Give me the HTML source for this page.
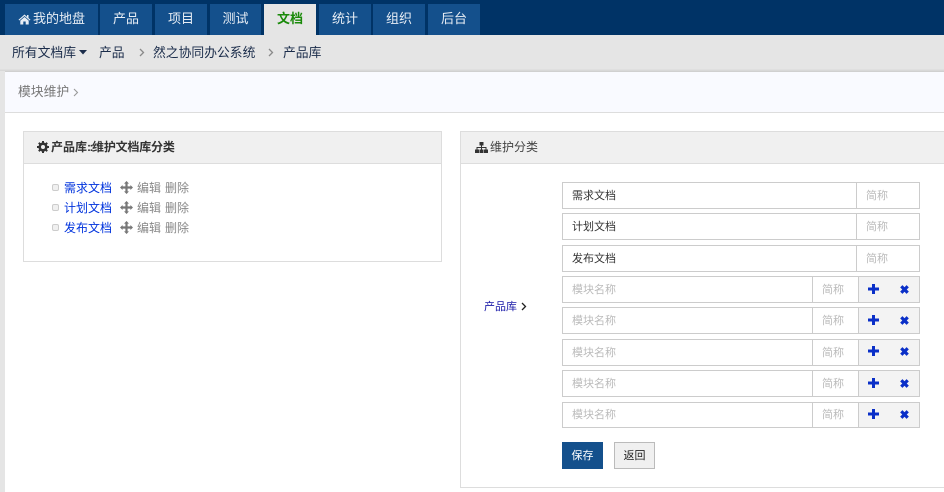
<!DOCTYPE html>
<html lang="zh">
<head>
<meta charset="utf-8">
<title>模块维护</title>
<style>
html,body{margin:0;padding:0}
body{width:944px;height:492px;overflow:hidden;position:relative;background:#e5e5e5;font-family:"Liberation Sans","Noto Sans CJK SC",sans-serif;font-size:12px;color:#333}
.a{position:absolute;box-sizing:border-box;white-space:nowrap}
.tab{position:absolute;top:4px;height:31px;background:#14508c;color:#e8eef5;font-size:13px;line-height:30px;text-align:center}
.crumb{position:absolute;top:35px;height:36px;line-height:35px;font-size:12.8px;color:#1a2c4a;white-space:nowrap}
.li{position:absolute;left:64px;height:20px;line-height:20px;color:#0033dd;white-space:nowrap}
.li i{position:absolute;left:-12px;top:6px;width:7px;height:7px;background:#f0f0f0;border:1px solid #ccc;border-radius:2px;box-sizing:border-box}
.g{color:#888}
.row{position:absolute;left:562px;width:358px;border:1px solid #ccc;box-sizing:border-box;background:#fff;line-height:27px;white-space:nowrap;font-size:11px}
.row span{position:absolute;top:0}
.row .v{left:9px;color:#333}
.row .p{left:9px;color:#bbb}
.row .s1{left:293px;top:0;bottom:0;width:1px;background:#ccc;height:100%}
.row .t1{left:303px;color:#bbb}
.row .s2{left:249px;width:1px;height:100%;background:#ccc}
.row .t2{left:259px;color:#bbb}
.row .add{left:295px;width:61px;height:100%;background:#f3f3f3;border-left:1px solid #ccc;box-sizing:border-box}
svg{display:block;position:absolute}
</style>
</head>
<body>
<div class="a" style="left:0;top:0;width:944px;height:35px;background:#003366"></div>
<div class="tab" style="left:5px;width:93px;padding-left:15px;box-sizing:border-box">我的地盘</div>
<svg style="left:18px;top:14px" width="13" height="11" viewBox="0 0 13 11"><path d="M6.5 0.5 L0.5 5.7 L1.3 6.5 L6.5 2 L11.7 6.5 L12.5 5.7 L10.5 4 V1 H9 V2.7Z M2.3 6.6 V10.5 H5.3 V7.5 H7.7 V10.5 H10.7 V6.6 L6.5 3Z" fill="#e8eef5"/></svg>
<div class="tab" style="left:100px;width:52px">产品</div>
<div class="tab" style="left:155px;width:52px">项目</div>
<div class="tab" style="left:210px;width:51px">测试</div>
<div class="tab" style="left:264px;width:52px;background:#e5e5e5;color:#1a8a0a;font-weight:bold">文档</div>
<div class="tab" style="left:319px;width:52px">统计</div>
<div class="tab" style="left:373px;width:52px">组织</div>
<div class="tab" style="left:428px;width:52px">后台</div>

<div class="crumb" style="left:12px">所有文档库</div>
<svg style="left:79px;top:50px" width="8" height="5" viewBox="0 0 8 5"><path d="M0 0H8L4 4.5Z" fill="#1a2c4a"/></svg>
<div class="crumb" style="left:99px">产品</div>
<svg style="left:139px;top:48px" width="6" height="9" viewBox="0 0 6 9"><path d="M1 1L4.5 4.5L1 8" fill="none" stroke="#8a8a8a" stroke-width="1.3"/></svg>
<div class="crumb" style="left:153px">然之协同办公系统</div>
<svg style="left:268px;top:48px" width="6" height="9" viewBox="0 0 6 9"><path d="M1 1L4.5 4.5L1 8" fill="none" stroke="#8a8a8a" stroke-width="1.3"/></svg>
<div class="crumb" style="left:283px">产品库</div>

<div class="a" style="left:0;top:69px;width:944px;height:2px;background:linear-gradient(#e2e2e2,#d4d4d4)"></div>
<div class="a" style="left:5px;top:71px;width:939px;height:421px;background:#fff;border-top:1px solid #d0d0d0"></div>
<div class="a" style="left:5px;top:72px;width:939px;height:41px;background:#f9faff;border-bottom:1px solid #ddd"></div>
<div class="a" style="left:18px;top:72px;line-height:40px;font-size:12.8px;color:#777">模块维护</div>
<svg style="left:73px;top:88px" width="6" height="9" viewBox="0 0 6 9"><path d="M1 1L4.5 4.5L1 8" fill="none" stroke="#999" stroke-width="1.1"/></svg>

<!-- left panel -->
<div class="a" style="left:23px;top:131px;width:419px;height:131px;border:1px solid #ddd;background:#fff"></div>
<div class="a" style="left:24px;top:132px;width:417px;height:32px;background:#f0f0f0;border-bottom:1px solid #ddd"></div>
<svg style="left:37px;top:141px" width="12" height="12" viewBox="0 0 12 12"><circle cx="6" cy="6" r="3.4" fill="none" stroke="#333" stroke-width="2.4"/><path d="M6 0V12M0 6H12M1.8 1.8L10.2 10.2M10.2 1.8L1.8 10.2" stroke="#333" stroke-width="2"/><circle cx="6" cy="6" r="2" fill="#f0f0f0"/></svg>
<div class="a" style="left:51px;top:132px;line-height:31px;font-weight:bold;color:#333">产品库<span style="letter-spacing:-1.5px">::</span><span style="letter-spacing:-0.2px">维护文档库分类</span></div>

<div class="li" style="top:178px"><i></i>需求文档<span class="g" style="position:absolute;left:73px">编辑</span><span class="g" style="position:absolute;left:101px">删除</span></div>
<div class="li" style="top:198px"><i></i>计划文档<span class="g" style="position:absolute;left:73px">编辑</span><span class="g" style="position:absolute;left:101px">删除</span></div>
<div class="li" style="top:218px"><i></i>发布文档<span class="g" style="position:absolute;left:73px">编辑</span><span class="g" style="position:absolute;left:101px">删除</span></div>
<svg style="left:120px;top:181px" width="13" height="13" viewBox="0 0 13 13"><path d="M6.5 0L9 2.6H7.6V5.4H10.4V4L13 6.5L10.4 9V7.6H7.6V10.4H9L6.5 13L4 10.4H5.4V7.6H2.6V9L0 6.5L2.6 4V5.4H5.4V2.6H4Z" fill="#777"/></svg>
<svg style="left:120px;top:201px" width="13" height="13" viewBox="0 0 13 13"><path d="M6.5 0L9 2.6H7.6V5.4H10.4V4L13 6.5L10.4 9V7.6H7.6V10.4H9L6.5 13L4 10.4H5.4V7.6H2.6V9L0 6.5L2.6 4V5.4H5.4V2.6H4Z" fill="#777"/></svg>
<svg style="left:120px;top:221px" width="13" height="13" viewBox="0 0 13 13"><path d="M6.5 0L9 2.6H7.6V5.4H10.4V4L13 6.5L10.4 9V7.6H7.6V10.4H9L6.5 13L4 10.4H5.4V7.6H2.6V9L0 6.5L2.6 4V5.4H5.4V2.6H4Z" fill="#777"/></svg>

<!-- right panel -->
<div class="a" style="left:460px;top:131px;width:490px;height:357px;border:1px solid #ddd;background:#fff"></div>
<div class="a" style="left:461px;top:132px;width:483px;height:32px;background:#f0f0f0;border-bottom:1px solid #ddd"></div>
<svg style="left:475px;top:142px" width="13" height="11" viewBox="0 0 13 11"><path d="M4.5 0H8.5V3.5H7V5H11.5V7.5H13V11H9V7.5H10.5V6H7V7.5H8.5V11H4.5V7.5H6V6H2.5V7.5H4V11H0V7.5H1.5V5H6V3.5H4.5Z" fill="#333"/></svg>
<div class="a" style="left:490px;top:132px;line-height:31px;color:#444">维护分类</div>

<div class="a" style="left:484px;top:298px;line-height:18px;font-size:11px;color:#1a1aa8">产品库</div>
<svg style="left:521px;top:302px" width="6" height="9" viewBox="0 0 6 9"><path d="M1 1L4.5 4.5L1 8" fill="none" stroke="#222" stroke-width="1.3"/></svg>

<div class="row" style="top:182px;height:27px"><span class="v">需求文档</span><span class="s1"></span><span class="t1">简称</span></div>
<div class="row" style="top:213px;height:27px"><span class="v">计划文档</span><span class="s1"></span><span class="t1">简称</span></div>
<div class="row" style="top:245px;height:27px"><span class="v">发布文档</span><span class="s1"></span><span class="t1">简称</span></div>

<div class="row" style="top:276px;height:27px"><span class="p">模块名称</span><span class="s2"></span><span class="t2">简称</span><span class="add"></span></div>
<div class="row" style="top:307px;height:27px"><span class="p">模块名称</span><span class="s2"></span><span class="t2">简称</span><span class="add"></span></div>
<div class="row" style="top:339px;height:27px"><span class="p">模块名称</span><span class="s2"></span><span class="t2">简称</span><span class="add"></span></div>
<div class="row" style="top:370px;height:27px"><span class="p">模块名称</span><span class="s2"></span><span class="t2">简称</span><span class="add"></span></div>
<div class="row" style="top:402px;height:26px;line-height:25px"><span class="p">模块名称</span><span class="s2"></span><span class="t2">简称</span><span class="add"></span></div>

<svg style="left:868px;top:284px" width="11" height="10" viewBox="0 0 11 10"><path d="M4 0H7V3.5H11V6.5H7V10H4V6.5H0V3.5H4Z" fill="#0a2fc8"/></svg>
<svg style="left:868px;top:315px" width="11" height="10" viewBox="0 0 11 10"><path d="M4 0H7V3.5H11V6.5H7V10H4V6.5H0V3.5H4Z" fill="#0a2fc8"/></svg>
<svg style="left:868px;top:346px" width="11" height="10" viewBox="0 0 11 10"><path d="M4 0H7V3.5H11V6.5H7V10H4V6.5H0V3.5H4Z" fill="#0a2fc8"/></svg>
<svg style="left:868px;top:378px" width="11" height="10" viewBox="0 0 11 10"><path d="M4 0H7V3.5H11V6.5H7V10H4V6.5H0V3.5H4Z" fill="#0a2fc8"/></svg>
<svg style="left:868px;top:409px" width="11" height="10" viewBox="0 0 11 10"><path d="M4 0H7V3.5H11V6.5H7V10H4V6.5H0V3.5H4Z" fill="#0a2fc8"/></svg>

<svg style="left:900px;top:285px" width="9" height="9" viewBox="0 0 9 9"><path d="M1.3 1.3L7.7 7.7M7.7 1.3L1.3 7.7" stroke="#0a2fc8" stroke-width="3.2"/></svg>
<svg style="left:900px;top:316px" width="9" height="9" viewBox="0 0 9 9"><path d="M1.3 1.3L7.7 7.7M7.7 1.3L1.3 7.7" stroke="#0a2fc8" stroke-width="3.2"/></svg>
<svg style="left:900px;top:347px" width="9" height="9" viewBox="0 0 9 9"><path d="M1.3 1.3L7.7 7.7M7.7 1.3L1.3 7.7" stroke="#0a2fc8" stroke-width="3.2"/></svg>
<svg style="left:900px;top:379px" width="9" height="9" viewBox="0 0 9 9"><path d="M1.3 1.3L7.7 7.7M7.7 1.3L1.3 7.7" stroke="#0a2fc8" stroke-width="3.2"/></svg>
<svg style="left:900px;top:410px" width="9" height="9" viewBox="0 0 9 9"><path d="M1.3 1.3L7.7 7.7M7.7 1.3L1.3 7.7" stroke="#0a2fc8" stroke-width="3.2"/></svg>

<div class="a" style="left:562px;top:442px;width:41px;height:27px;background:#14508c;color:#fff;text-align:center;line-height:28px;font-size:11px">保存</div>
<div class="a" style="left:614px;top:442px;width:41px;height:27px;background:#f0f0f0;border:1px solid #bbb;color:#222;text-align:center;line-height:26px;font-size:11px">返回</div>
</body>
</html>
